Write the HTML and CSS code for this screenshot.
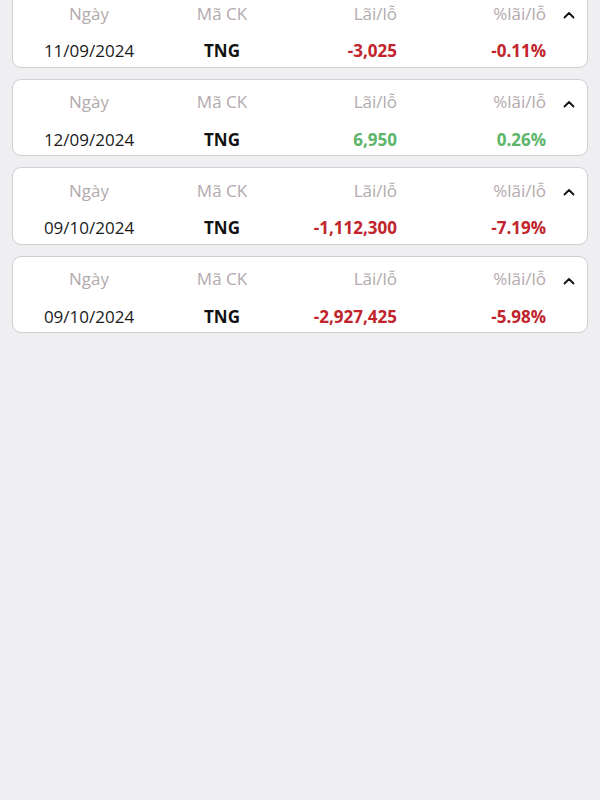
FILE: index.html
```html
<!DOCTYPE html>
<html lang="vi">
<head>
<meta charset="utf-8">
<link rel="stylesheet" href="styles.css">
</head>
<body>
<div class="list">
  <div class="card">
    <div class="row head"><span class="c1">Ngày</span><span class="c2">Mã CK</span><span class="c3">Lãi/lỗ</span><span class="c4">%lãi/lỗ</span><span class="c5"><svg viewBox="0 0 12 8" width="12" height="8"><path d="M1.5 6.5 L6 2 L10.5 6.5" fill="none" stroke="#111" stroke-width="1.8" stroke-linecap="round" stroke-linejoin="round"/></svg></span></div>
    <div class="row val"><span class="c1">11/09/2024</span><span class="c2 sym">TNG</span><span class="c3 neg">-3,025</span><span class="c4 neg">-0.11%</span><span class="c5"></span></div>
  </div>
  <div class="card">
    <div class="row head"><span class="c1">Ngày</span><span class="c2">Mã CK</span><span class="c3">Lãi/lỗ</span><span class="c4">%lãi/lỗ</span><span class="c5"><svg viewBox="0 0 12 8" width="12" height="8"><path d="M1.5 6.5 L6 2 L10.5 6.5" fill="none" stroke="#111" stroke-width="1.8" stroke-linecap="round" stroke-linejoin="round"/></svg></span></div>
    <div class="row val"><span class="c1">12/09/2024</span><span class="c2 sym">TNG</span><span class="c3 pos">6,950</span><span class="c4 pos">0.26%</span><span class="c5"></span></div>
  </div>
  <div class="card">
    <div class="row head"><span class="c1">Ngày</span><span class="c2">Mã CK</span><span class="c3">Lãi/lỗ</span><span class="c4">%lãi/lỗ</span><span class="c5"><svg viewBox="0 0 12 8" width="12" height="8"><path d="M1.5 6.5 L6 2 L10.5 6.5" fill="none" stroke="#111" stroke-width="1.8" stroke-linecap="round" stroke-linejoin="round"/></svg></span></div>
    <div class="row val"><span class="c1">09/10/2024</span><span class="c2 sym">TNG</span><span class="c3 neg">-1,112,300</span><span class="c4 neg">-7.19%</span><span class="c5"></span></div>
  </div>
  <div class="card">
    <div class="row head"><span class="c1">Ngày</span><span class="c2">Mã CK</span><span class="c3">Lãi/lỗ</span><span class="c4">%lãi/lỗ</span><span class="c5"><svg viewBox="0 0 12 8" width="12" height="8"><path d="M1.5 6.5 L6 2 L10.5 6.5" fill="none" stroke="#111" stroke-width="1.8" stroke-linecap="round" stroke-linejoin="round"/></svg></span></div>
    <div class="row val"><span class="c1">09/10/2024</span><span class="c2 sym">TNG</span><span class="c3 neg">-2,927,425</span><span class="c4 neg">-5.98%</span><span class="c5"></span></div>
  </div>
</div>
</body>
</html>
```

FILE: styles.css
```css
html, body {
  margin: 0;
  padding: 0;
  background: #efeff2;
  font-family: "Open Sans", "Noto Sans", sans-serif;
  height: 100%;
  overflow: hidden;
}

.list {
  display: flex;
  flex-direction: column;
  gap: 11px;
  margin-top: -10px;
  padding: 0 12px;
}

.card {
  box-sizing: border-box;
  height: 77.5px;
  background: #fff;
  border: 1px solid #cfcfd3;
  border-radius: 9px;
  padding-top: 10.5px;
  display: flex;
  flex-direction: column;
  gap: 13.5px;
}

.row {
  display: grid;
  grid-template-columns: 152px 114px 118px 149px 41px;
  align-items: center;
  height: 24px;
  line-height: 24px;
  font-size: 17px;
}

.c1, .c2 { text-align: center; }
.c3, .c4 { text-align: right; }
.c5 {
  display: flex;
  justify-content: center;
  padding-left: 4px;
  padding-top: 3px;
}
.c5 svg { display: block; }

.head { color: #b3aaad; }
.val { color: #1a1a1a; }
.sym { font-weight: 700; color: #111; }
.neg { font-weight: 700; color: #c1242c; }
.pos { font-weight: 700; color: #5db56a; }
```
